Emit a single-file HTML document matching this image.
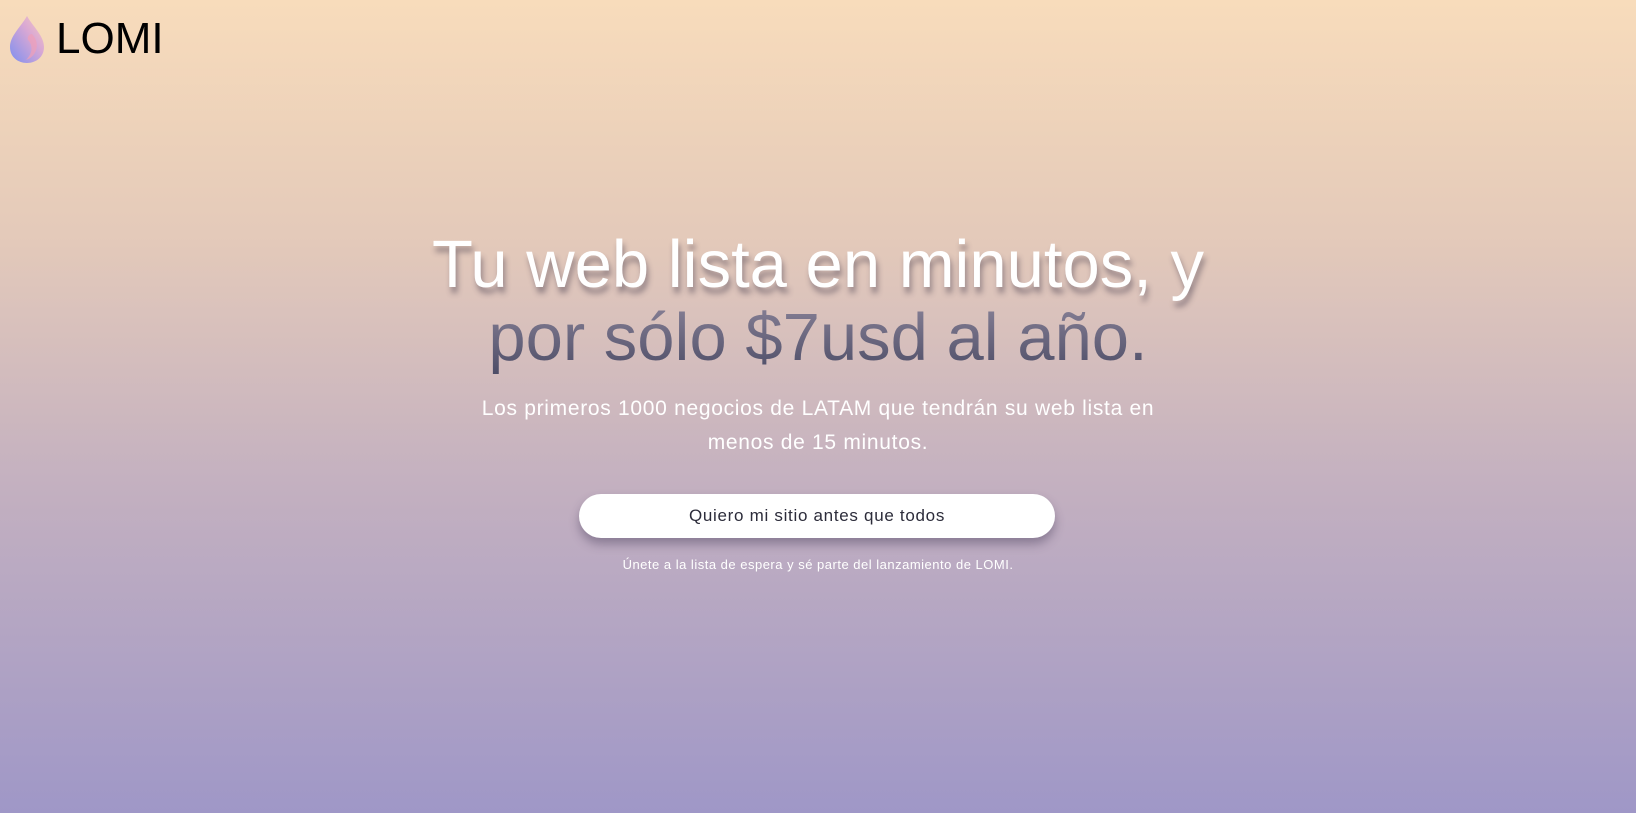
<!DOCTYPE html>
<html><head><meta charset="utf-8"><style>
html,body{margin:0;padding:0;width:1636px;height:813px;overflow:hidden}
body{background:linear-gradient(180deg,#f8dcbb 0%,#e3c9ba 30%,#c3b0c0 60%,#9f97c7 100%);font-family:"Liberation Sans",sans-serif;position:relative}
.logo{position:absolute;left:8px;top:14px;display:flex;align-items:center}
.logo span{font-size:44px;color:#000;margin-left:10px;line-height:1}
h1{position:absolute;left:0;width:1636px;top:228px;margin:0;text-align:center;font-weight:400;font-size:67px;line-height:73px}
.l1{color:#fff;text-shadow:2px 6px 6px rgba(60,50,70,.45)}
.l2{background:linear-gradient(180deg,#8a8398 0%,#4c4c66 100%);-webkit-background-clip:text;background-clip:text;color:transparent}
.sub{position:absolute;left:0;width:1636px;top:392px;text-align:center;color:#fff;font-size:21px;line-height:34px;letter-spacing:.7px}
.btn{position:absolute;left:579px;top:494px;width:476px;height:44px;border-radius:22px;background:#fff;box-shadow:0 6px 10px rgba(60,50,80,.4);text-align:center;line-height:44px;font-size:17px;color:#2c2c3a;letter-spacing:.7px}
.small{position:absolute;left:0;width:1636px;top:557px;text-align:center;color:#fff;font-size:13px;letter-spacing:.5px}
</style></head><body>
<div class="logo">
<svg width="38" height="50" viewBox="0 0 38 50"><defs><linearGradient id="g" x1="0" y1="1" x2="1" y2="0"><stop offset="0" stop-color="#7d8ff0"/><stop offset=".6" stop-color="#d9a8d4"/><stop offset="1" stop-color="#f7c9c0"/></linearGradient></defs><path d="M19 2 C12 14 2 22 2 33 C2 43 10 49 19 49 C28 49 36 43 36 33 C36 22 26 14 19 2Z" fill="url(#g)"/><path d="M24 20 C32 28 30 42 18 46 C26 38 24 30 20 26 C19 23 21 20 24 20Z" fill="#ef9fb8" opacity=".7"/></svg>
<span>LOMI</span></div>
<h1><span class="l1">Tu web lista en minutos, y</span><br><span class="l2">por sólo $7usd al año.</span></h1>
<div class="sub">Los primeros 1000 negocios de LATAM que tendrán su web lista en<br>menos de 15 minutos.</div>
<div class="btn">Quiero mi sitio antes que todos</div>
<div class="small">Únete a la lista de espera y sé parte del lanzamiento de LOMI.</div>
</body></html>
